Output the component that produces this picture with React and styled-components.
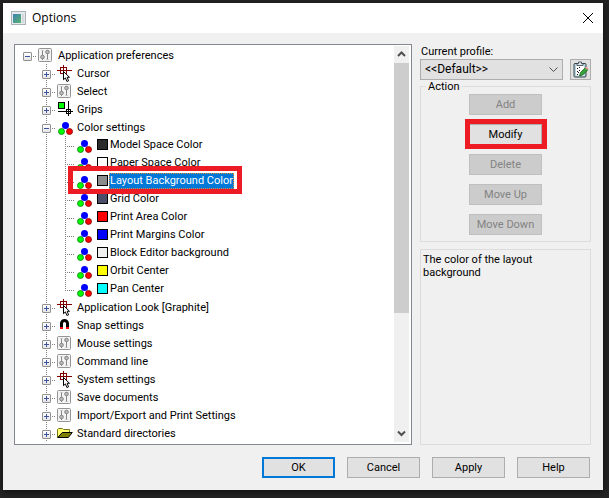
import React from 'react'
import styled, { createGlobalStyle, css } from 'styled-components'

const GlobalStyle = createGlobalStyle`
    * {
        box-sizing: border-box;
    }
    body {
        margin: 0;
        background: #232323;
        color: #000;
        font-family: Roboto, "Liberation Sans", sans-serif;
        font-size: 11px;
        line-height: 13px;
    }
    button, select {
        font: inherit;
        color: inherit;
    }
    svg {
        display: block;
        flex: none;
    }
`
const Page = styled.div`
    padding: 3px 6px 8px 3px;
`
const Dialog = styled.section`
    background: #f0f0f0;
    box-shadow: 0 2px 6px #111;
`
const TitleBar = styled.header`
    display: flex;
    align-items: center;
    height: 30px;
    padding: 0 10px 0 8px;
    background: #fff;
    h1 {
        flex: 1;
        margin: 0 0 0 6px;
        font-family: "Open Sans", "Noto Sans", sans-serif;
        font-size: 12px;
        font-weight: 400;
        line-height: 16px;
    }
`
const CloseButton = styled.button`
    padding: 0;
    border: 0;
    background: none;
`
const Content = styled.div`
    padding: 11px 12px 12px 11px;
`
const Columns = styled.div`
    display: flex;
    gap: 8px;
`
const TreeBox = styled.div`
    display: flex;
    flex: 1;
    min-width: 0;
    padding: 1px 2px 2px 1px;
    border: 1px solid #828790;
    background: #fff;
`
const TreeList = styled.ul`
    flex: 1;
    min-width: 0;
    margin: 0;
    padding: 0 0 0 2px;
    list-style: none;
`
const TreeRow = styled.li`
    display: flex;
    height: 18px;
`
const RowMain = styled.div`
    display: flex;
    gap: 3px;
    padding: 1px 0 1px 1px;
    ${props => props.$marked && css`
        position: relative;
        &::after {
            content: '';
            position: absolute;
            z-index: 1;
            inset: -6px -8px -4px -7px;
            border: 5px solid #ed1c24;
        }
    `}
`
const dots = angle => `repeating-linear-gradient(${angle}, #808080 0 1px, transparent 1px 2px)`
const Guide = styled.span`
    width: 19px;
    padding: 6px 5px 0;
    background-image: ${dots('180deg')}, ${dots('90deg')};
    background-repeat: no-repeat;
    background-position: 9px 0, 9px 10px;
    background-size: ${props => {
        const height = props.$line === 'full' ? '18px' : props.$line === 'half' ? '10px' : '0'
        return `1px ${height}, ${props.$branch ? '10px' : '0'} 1px`
    }};
`
const Expander = styled.button`
    display: block;
    width: 9px;
    height: 9px;
    padding: 0;
    border: 1px solid #919191;
    border-radius: 1px;
    background: linear-gradient(#fff, #e4e4e4);
`
const Swatch = styled.span`
    width: 11px;
    height: 11px;
    margin: 2px 0 0 2px;
    border: 1px solid #000;
    background: ${props => props.$color};
`
const Name = styled.span`
    height: 16px;
    padding: 0 1px;
    line-height: 18px;
    white-space: nowrap;
    ${props => props.$color && css`
        margin-left: -2px;
        line-height: 16px;
    `}
    ${props => props.$selected && css`
        background: #0078d7;
        color: #fff;
        outline: 1px dotted #e08a3c;
        outline-offset: -1px;
    `}
`
const ScrollBar = styled.div`
    display: flex;
    flex-direction: column;
    width: 15px;
    background: #f0f0f0;
`
const ScrollButton = styled.button`
    display: grid;
    place-items: center;
    height: 17px;
    padding: 0;
    border: 0;
    background: none;
`
const ScrollTrack = styled.div`
    flex: 1;
`
const ScrollThumb = styled.div`
    height: 69%;
    background: #cdcdcd;
`
const SidePanel = styled.div`
    display: flex;
    flex-direction: column;
    width: 171px;
`
const ProfileLabel = styled.label`
    padding-left: 1px;
    line-height: 15px;
`
const ProfileRow = styled.div`
    display: flex;
    gap: 7px;
    height: 21px;
`
const SelectBox = styled.div`
    display: grid;
    flex: 1;
    align-items: center;
    select, svg {
        grid-area: 1 / 1;
    }
    svg {
        justify-self: end;
        margin-right: 4px;
        pointer-events: none;
    }
`
const Select = styled.select`
    appearance: none;
    width: 100%;
    height: 21px;
    padding: 0 20px 0 4px;
    border: 1px solid #adadad;
    border-radius: 0;
    background: #e1e1e1;
    font-size: 12px;
`
const IconButton = styled.button`
    display: grid;
    place-items: center;
    width: 21px;
    padding: 0;
    border: 1px solid #adadad;
    background: #e1e1e1;
`
const ActionGroup = styled.fieldset`
    display: flex;
    flex-direction: column;
    align-items: center;
    gap: 9px;
    min-width: 0;
    margin: 0 0 7px;
    padding: 1px 0 6px;
    border: 1px solid #dcdcdc;
    legend {
        margin-left: 5px;
        padding: 0 2px;
    }
`
const Button = styled.button`
    width: 73px;
    height: 21px;
    padding: 0;
    border: ${props => props.$primary ? '2px solid #0078d7' : '1px solid #adadad'};
    background: #e1e1e1;
    &:disabled {
        border-color: #bfbfbf;
        background: #ccc;
        color: #838383;
    }
    ${props => props.$marked && css`
        position: relative;
        &::after {
            content: '';
            position: absolute;
            inset: -6px -6px -5px -5px;
            border: 5px solid #ed1c24;
        }
    `}
`
const Description = styled.p`
    flex: 1;
    margin: 0;
    padding: 3px 24px 3px 2px;
    border: 1px solid #dcdcdc;
`
const Footer = styled.footer`
    display: flex;
    justify-content: flex-end;
    gap: 12px;
    padding: 12px 1px 0 0;
`

const SlidersIcon = () => (
    <svg width="16" height="16" viewBox="0 0 16 16">
        <rect x=".5" y="1.5" width="13" height="13" rx="1" fill="#f3f3f3" stroke="#949494" />
        <path d="M4.5 3v10M9.5 3v10" stroke="#858585" />
        <path d="M3.5 3.5h2M8.5 12.5h2" stroke="#b5b5b5" />
        <circle cx="4.5" cy="10" r="1.8" fill="#bdbdbd" stroke="#858585" />
        <circle cx="9.5" cy="5" r="1.8" fill="#bdbdbd" stroke="#858585" />
    </svg>
)
const CursorIcon = () => (
    <svg width="16" height="16" viewBox="0 0 16 16" overflow="visible">
        <path d="M0 5.5h15M6.5 0v12M3.5 2.5h6v6h-6z" fill="none" stroke="#800000" shapeRendering="crispEdges" />
        <path d="M6.5 6.5v8.2l1.9-1.8 1.5 3.6 1.7-.7-1.5-3.5h2.4z" fill="#fff" stroke="#000" />
    </svg>
)
const GripsIcon = () => (
    <svg width="16" height="16" viewBox="0 0 16 16" shapeRendering="crispEdges">
        <rect x="1.5" y="1.5" width="6" height="6" fill="#0f0" stroke="#000" />
        <path d="M1 10.5h15M11.5 0v15M9.5 8.5h4v4h-4z" fill="none" stroke="#000" />
    </svg>
)
const ColorsIcon = () => (
    <svg width="16" height="16" viewBox="0 0 16 16">
        <circle cx="8.5" cy="6.5" r="3.5" fill="#00f" />
        <circle cx="4.5" cy="12.5" r="3" fill="#0f0" stroke="#087808" strokeWidth=".8" />
        <circle cx="12.5" cy="12.5" r="3" fill="#f00" stroke="#800000" strokeWidth=".8" />
    </svg>
)
const MagnetIcon = () => (
    <svg width="16" height="16" viewBox="0 0 16 16">
        <path d="M4.5 11V6.500a3 3 0 0 1 6 0V11" fill="none" stroke="#000" strokeWidth="3" />
        <path d="M3 10h3v2H3zM9 10h3v2H9z" fill="#f00" />
    </svg>
)
const FolderIcon = () => (
    <svg width="16" height="16" viewBox="0 0 16 16">
        <path d="M.5 12.500v-8l1-1h4l1 1h6v3h-7z" fill="#ffff70" stroke="#77771a" />
        <path d="M.8 12.500l4.500-5h10l-4 5z" fill="#808000" stroke="#000" />
    </svg>
)
const AppIcon = () => (
    <svg width="15" height="14" viewBox="0 0 15 14">
        <defs>
            <linearGradient id="screen" x1="0" y1="0" x2="1" y2="1">
                <stop offset="0" stopColor="#3f7fb5" />
                <stop offset="1" stopColor="#57b56b" />
            </linearGradient>
        </defs>
        <rect x=".5" y=".5" width="14" height="13" fill="#e6eaec" stroke="#a9b1b6" />
        <path d="M2 3h8v9H2z" fill="url(#screen)" />
        <path d="M11 3h2v9h-2z" fill="#d3d9dc" />
    </svg>
)
const ClipboardIcon = () => (
    <svg width="17" height="17" viewBox="0 0 17 17">
        <rect x="2" y="2.500" width="12" height="13.500" rx="1" fill="#b9d3dc" stroke="#33454d" />
        <path d="M4 4.500h8v10H4z" fill="#fff" />
        <path d="M5 4.500v-2h1.500v-1.500h3v1.500h1.500v2z" fill="#dce6ea" stroke="#33454d" strokeWidth=".8" />
        <path d="M5 7h1v1H5zM7 6h1v1H7zM5 10h1v1H5zM6 11h1v1H6zM7 9h1v1H7zM5 13h1v1H5z" fill="#111" />
        <path d="M7.500 14.800l1-3.200 5-5 2.300 2.300-5 5z" fill="#36a83c" stroke="#145c1b" strokeWidth=".8" />
        <path d="M13 6.800l1.300-1.300 2.300 2.300-1.300 1.300z" fill="#e99a94" />
    </svg>
)
const Chevron = ({ up, bold }) => (
    <svg width="11" height="7" viewBox="0 0 11 7">
        <path
            d={up ? 'M2 5l3.500-3.500 3.500 3.500' : bold ? 'M2 1.500l3.500 3.500 3.500-3.500' : 'M1.500 1.500l4 4 4-4'}
            fill="none"
            stroke="#505050"
            strokeWidth={bold ? 2 : 1}
        />
    </svg>
)

const icons = {
    sliders: SlidersIcon,
    cursor: CursorIcon,
    grips: GripsIcon,
    colors: ColorsIcon,
    magnet: MagnetIcon,
    folder: FolderIcon
}
const rows = [
    { level: 0, icon: 'sliders', name: 'Application preferences', open: true },
    { level: 1, icon: 'cursor', name: 'Cursor' },
    { level: 1, icon: 'sliders', name: 'Select' },
    { level: 1, icon: 'grips', name: 'Grips' },
    { level: 1, icon: 'colors', name: 'Color settings', open: true },
    { level: 2, icon: 'colors', name: 'Model Space Color', color: '#2b2b2b' },
    { level: 2, icon: 'colors', name: 'Paper Space Color', color: '#fff' },
    { level: 2, icon: 'colors', name: 'Layout Background Color', color: '#8c8c8c', selected: true },
    { level: 2, icon: 'colors', name: 'Grid Color', color: '#4a4e69' },
    { level: 2, icon: 'colors', name: 'Print Area Color', color: '#f00' },
    { level: 2, icon: 'colors', name: 'Print Margins Color', color: '#00f' },
    { level: 2, icon: 'colors', name: 'Block Editor background', color: '#f0f0f0' },
    { level: 2, icon: 'colors', name: 'Orbit Center', color: '#ff0' },
    { level: 2, icon: 'colors', name: 'Pan Center', color: '#0ff', last: true },
    { level: 1, icon: 'cursor', name: 'Application Look [Graphite]' },
    { level: 1, icon: 'magnet', name: 'Snap settings' },
    { level: 1, icon: 'sliders', name: 'Mouse settings' },
    { level: 1, icon: 'sliders', name: 'Command line' },
    { level: 1, icon: 'cursor', name: 'System settings' },
    { level: 1, icon: 'sliders', name: 'Save documents' },
    { level: 1, icon: 'sliders', name: 'Import/Export and Print Settings' },
    { level: 1, icon: 'folder', name: 'Standard directories' }
]

const TreeItem = props => {
    const { level, icon, name, open, color, selected, last } = props
    const Icon = icons[icon]
    return (
        <TreeRow role="treeitem" aria-level={level + 1} aria-selected={!!selected}>
            <Guide $branch={level === 0}>
                {level === 0 && <ExpandButton open={open} name={name} />}
            </Guide>
            {level > 0 && (
                <Guide $line="full" $branch={level === 1}>
                    {level === 1 && <ExpandButton open={open} name={name} />}
                </Guide>
            )}
            {level > 1 && <Guide $line={last ? 'half' : 'full'} $branch />}
            <RowMain $marked={selected}>
                <Icon />
                {color && <Swatch $color={color} />}
                <Name $color={color} $selected={selected}>{name}</Name>
            </RowMain>
        </TreeRow>
    )
}
const ExpandButton = ({ open, name }) => (
    <Expander aria-label={`${open ? 'Collapse' : 'Expand'} ${name}`}>
        <svg width="7" height="7" viewBox="0 0 7 7" shapeRendering="crispEdges">
            <path d={open ? 'M1 3.500h5' : 'M1 3.500h5M3.500 1v5'} stroke="#3c54a0" />
        </svg>
    </Expander>
)

const App = () => (
    <Page>
        <GlobalStyle />
        <Dialog role="dialog" aria-labelledby="title">
            <TitleBar>
                <AppIcon />
                <h1 id="title">Options</h1>
                <CloseButton aria-label="Close">
                    <svg width="10" height="10" viewBox="0 0 10 10">
                        <path d="M0 0l10 10M10 0l-10 10" stroke="#000" />
                    </svg>
                </CloseButton>
            </TitleBar>
            <Content>
                <Columns>
                    <TreeBox>
                        <TreeList role="tree">
                            {rows.map(row => <TreeItem key={row.name} {...row} />)}
                        </TreeList>
                        <ScrollBar>
                            <ScrollButton aria-label="Scroll up"><Chevron up bold /></ScrollButton>
                            <ScrollTrack><ScrollThumb /></ScrollTrack>
                            <ScrollButton aria-label="Scroll down"><Chevron bold /></ScrollButton>
                        </ScrollBar>
                    </TreeBox>
                    <SidePanel>
                        <ProfileLabel htmlFor="profile">Current profile:</ProfileLabel>
                        <ProfileRow>
                            <SelectBox>
                                <Select id="profile">
                                    <option>&lt;&lt;Default&gt;&gt;</option>
                                </Select>
                                <Chevron />
                            </SelectBox>
                            <IconButton aria-label="Edit profiles"><ClipboardIcon /></IconButton>
                        </ProfileRow>
                        <ActionGroup>
                            <legend>Action</legend>
                            <Button disabled>Add</Button>
                            <Button $marked>Modify</Button>
                            <Button disabled>Delete</Button>
                            <Button disabled>Move Up</Button>
                            <Button disabled>Move Down</Button>
                        </ActionGroup>
                        <Description>The color of the layout background</Description>
                    </SidePanel>
                </Columns>
                <Footer>
                    <Button $primary>OK</Button>
                    <Button>Cancel</Button>
                    <Button>Apply</Button>
                    <Button>Help</Button>
                </Footer>
            </Content>
        </Dialog>
    </Page>
)
export default App
